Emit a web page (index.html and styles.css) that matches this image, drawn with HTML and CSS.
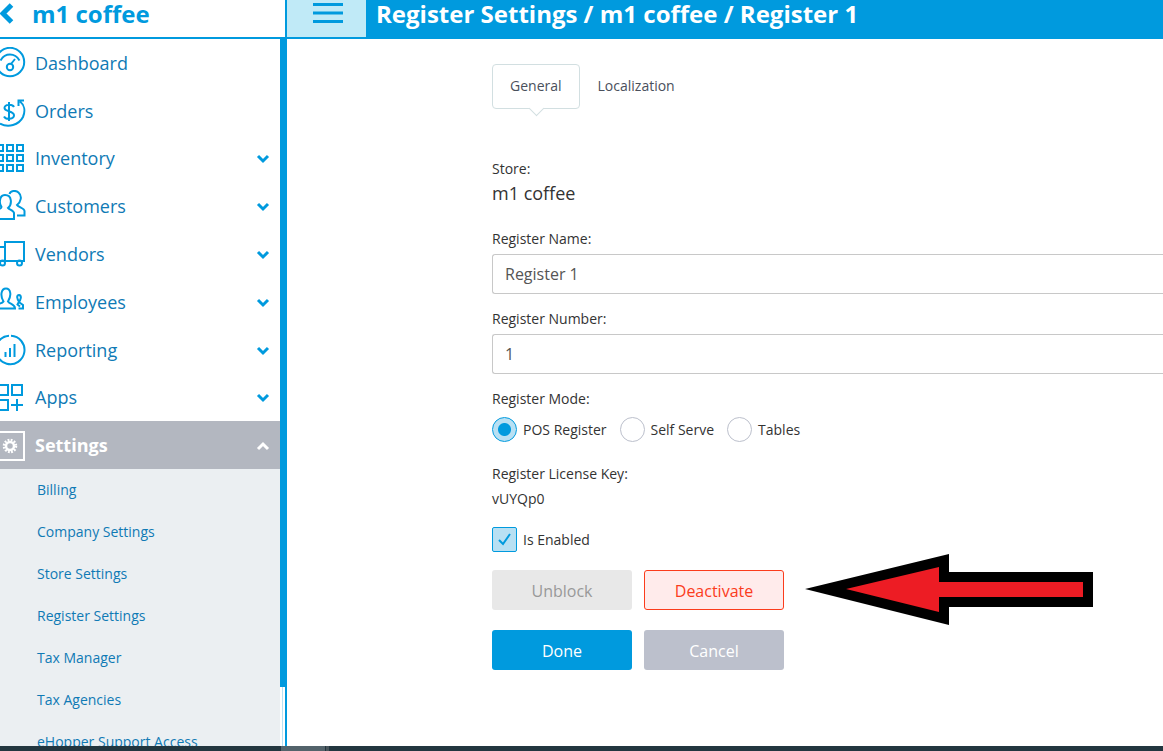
FILE: index.html
```html
<!DOCTYPE html>
<html lang="en">
<head>
    <meta charset="UTF-8">
    <meta name="viewport" content="width=device-width, initial-scale=1.0">
    <title>Register Settings</title>
    <link rel="stylesheet" href="styles.css">
</head>
<body>
    <div class="app">
        <!-- Top bar -->
        <header class="topbar">
            <a href="#" class="brand">
                <svg class="back-icon" width="14" height="28" viewBox="0 0 14 28"><path d="M11.500 5L3 13.500L11.500 22" /></svg>
                m1 coffee
            </a>
            <button type="button" class="menu-toggle" aria-label="Toggle menu">
                <svg width="30" height="20" viewBox="0 0 30 20"><path d="M0 1.500H30M0 10H30M0 18.500H30" /></svg>
            </button>
            <h1>Register Settings / m1 coffee / Register 1</h1>
        </header>

        <div class="content">
            <!-- Sidebar -->
            <aside class="sidebar">
                <nav class="nav">
                    <ul class="nav-list">
                        <li><a href="#">
                            <svg class="icon" viewBox="0 0 26 32"><circle cx="10" cy="15" r="14.2" /><path d="M0.500 13.500C5 5.500 15 5.500 19.500 13.500M11 17L15 12" /><circle cx="10" cy="20" r="3.200" /></svg>
                            Dashboard
                        </a></li>
                        <li><a href="#">
                            <svg class="icon" viewBox="0 0 26 32"><path d="M0 28.500C8 33 19 30 23 22C25.500 16 24.500 10 20 6.500M24 5.500H18.500V11" /><path d="M9 7V26M14 12C12.500 9 4.500 9 4.500 13C4.500 17 14 15.500 14 20.300C14 24.500 6 25 4 21.500" /></svg>
                            Orders
                        </a></li>
                        <li><a href="#">
                            <svg class="icon" viewBox="0 0 26 32"><path d="M-3 3H3V9H-3ZM7 3H13V9H7ZM17 3H23V9H17ZM-3 13H3V19H-3ZM7 13H13V19H7ZM17 13H23V19H17ZM-3 23H3V29H-3ZM7 23H13V29H7ZM17 23H23V29H17Z" /></svg>
                            Inventory
                            <svg class="chevron" viewBox="0 0 14 12"><path d="M2 4L7 9L12 4" /></svg>
                        </a></li>
                        <li><a href="#">
                            <svg class="icon" viewBox="0 0 26 32"><path d="M-3 29H14V23C14 20.500 9 19.500 8 18C12 15 12.500 5 5 5C-1 5-1 14 1.500 17C1.500 18.500-1 19-3 20M9.500 4C10.500 0.500 15.500 0 18.500 2.500C22.500 6 21 12 17 15C18 17 24.500 18.500 24.500 21V25.500H17" /></svg>
                            Customers
                            <svg class="chevron" viewBox="0 0 14 12"><path d="M2 4L7 9L12 4" /></svg>
                        </a></li>
                        <li><a href="#">
                            <svg class="icon" viewBox="0 0 26 32"><path d="M5 4H24V23H5ZM5 9H-1M-1 23H5" /><circle cx="2.500" cy="25" r="2.500" /><circle cx="19.500" cy="25" r="2.500" /></svg>
                            Vendors
                            <svg class="chevron" viewBox="0 0 14 12"><path d="M2 4L7 9L12 4" /></svg>
                        </a></li>
                        <li><a href="#">
                            <svg class="icon" viewBox="0 0 26 32"><path d="M-2 22.500H15C15 18 10 18.500 8 15.500C12 9 10.500 2.500 6 2.500C1 2.500 0 10 3.500 15.500C2.500 17.500-1 17.500-2 17.500M18.500 22.500H23V19L19.500 16.500C16.500 12.500 16.500 9 19 9C22 9.500 21 13.500 18.500 16.500L17.500 18.500L20 20.500" /></svg>
                            Employees
                            <svg class="chevron" viewBox="0 0 14 12"><path d="M2 4L7 9L12 4" /></svg>
                        </a></li>
                        <li><a href="#">
                            <svg class="icon" viewBox="0 0 26 32"><path d="M11 1.800A14.200 14.200 0 1 1-3 11M-3 11C-1 5 3 2.300 9 1.800M5.500 18V23M10 14V23M14.500 10V23" /></svg>
                            Reporting
                            <svg class="chevron" viewBox="0 0 14 12"><path d="M2 4L7 9L12 4" /></svg>
                        </a></li>
                        <li><a href="#">
                            <svg class="icon" viewBox="0 0 26 32"><path d="M-3 4H8V14H-3ZM12 4H22V14H12ZM-3 19H8V29H-3ZM17 18V30M11 24H23" /></svg>
                            Apps
                            <svg class="chevron" viewBox="0 0 14 12"><path d="M2 4L7 9L12 4" /></svg>
                        </a></li>
                        <li><a href="#" class="active">
                            <svg class="icon" viewBox="0 0 26 32"><path d="M-3 3H24V31H-3Z" /><circle class="gear" cx="10" cy="17" r="4" /><circle class="teeth" cx="10" cy="17" r="6" /></svg>
                            Settings
                            <svg class="chevron" viewBox="0 0 14 12"><path d="M2 10L7 5L12 10" /></svg>
                        </a></li>
                    </ul>
                    <ul class="subnav">
                        <li><a href="#">Billing</a></li>
                        <li><a href="#">Company Settings</a></li>
                        <li><a href="#">Store Settings</a></li>
                        <li><a href="#">Register Settings</a></li>
                        <li><a href="#">Tax Manager</a></li>
                        <li><a href="#">Tax Agencies</a></li>
                        <li><a href="#">eHopper Support Access</a></li>
                    </ul>
                </nav>
                <div class="scrollbar"><div class="scroll-thumb"></div></div>
            </aside>

            <!-- Register form -->
            <main class="main">
                <div class="tabs">
                    <button type="button" class="tab selected">General</button>
                    <button type="button" class="tab">Localization</button>
                </div>

                <form>
                    <div class="store">
                        <p>Store:</p>
                        <p class="store-name">m1 coffee</p>
                    </div>

                    <div class="form-group">
                        <label for="register-name">Register Name:</label>
                        <input type="text" id="register-name" value="Register 1">
                    </div>

                    <div class="form-group">
                        <label for="register-number">Register Number:</label>
                        <input type="text" id="register-number" value="1">
                    </div>

                    <fieldset class="mode">
                        <legend>Register Mode:</legend>
                        <div class="options">
                            <label class="option"><input type="radio" name="mode" checked>POS Register</label>
                            <label class="option"><input type="radio" name="mode">Self Serve</label>
                            <label class="option"><input type="radio" name="mode">Tables</label>
                        </div>
                    </fieldset>

                    <div class="license">
                        <p>Register License Key:</p>
                        <p>vUYQp0</p>
                    </div>

                    <label class="option">
                        <span class="checkbox">
                            <input type="checkbox" checked>
                            <svg class="tick" viewBox="0 0 25 25"><path d="M7 13L11 17L18 7" /></svg>
                        </span>
                        Is Enabled
                    </label>

                    <div class="actions">
                        <button type="button" class="btn btn-disabled" disabled>Unblock</button>
                        <button type="button" class="btn btn-danger">Deactivate</button>
                        <button type="submit" class="btn btn-primary">Done</button>
                        <button type="button" class="btn btn-cancel">Cancel</button>
                        <svg class="arrow" viewBox="0 0 288 71"><path d="M0 35L144 0V18H288V53H144V71Z" /><path class="arrow-fill" d="M41 35L134 13V28H278V43H134V58Z" /></svg>
                    </div>
                </form>
            </main>
        </div>

        <div class="bottom-strip"><span class="strip-item"></span><span class="strip-edge"></span></div>
    </div>
</body>
</html>
```
FILE: styles.css
```css
* {
    margin: 0;
    padding: 0;
    box-sizing: border-box;
}

body {
    font-family: 'Open Sans', sans-serif;
    font-size: 14px;
    line-height: 20px;
    background: white;
    color: #333;
    height: 100vh;
    overflow: hidden;
}

ul {
    list-style: none;
}

a {
    color: #0f7ab5;
    text-decoration: none;
}

button, input {
    font-family: inherit;
}

svg {
    fill: none;
    stroke: #009ade;
    stroke-width: 2;
    flex-shrink: 0;
}

.app {
    display: flex;
    flex-direction: column;
    height: 100vh;
}

/* Top bar */
.topbar {
    display: flex;
    height: 39px;
    flex-shrink: 0;
}

.brand {
    display: flex;
    width: 287px;
    gap: 18px;
    border-right: 2px solid #009ade;
    border-bottom: 2px solid #009ade;
    color: #009ade;
    font-size: 24px;
    font-weight: 700;
    line-height: 28px;
}

.back-icon {
    stroke-width: 5;
}

.menu-toggle {
    width: 79px;
    padding: 0 0 11px 2px;
    display: flex;
    align-items: center;
    justify-content: center;
    background: #c0eaf7;
    border: none;
    border-bottom: 2px solid #009ade;
    cursor: pointer;
}

.menu-toggle svg {
    stroke-width: 3;
}

h1 {
    flex: 1;
    padding-left: 10px;
    background: #009ade;
    color: white;
    font-size: 24px;
    font-weight: 700;
    line-height: 28px;
    white-space: nowrap;
}

.content {
    display: flex;
    flex: 1;
    min-height: 0;
}

/* Sidebar */
.sidebar {
    display: flex;
    width: 287px;
    flex-shrink: 0;
    overflow: hidden;
}

.nav {
    flex: 1;
    background: #ebeff2;
}

.nav-list {
    display: grid;
    grid-template-rows: repeat(9, 1fr);
    height: 430px;
    background: white;
}

.nav-list a {
    display: flex;
    align-items: center;
    height: 100%;
    padding-right: 10px;
    font-size: 18px;
}

.nav-list .active {
    background: #b3b7c0;
    color: white;
    font-weight: 700;
}

.icon {
    width: 26px;
    height: 32px;
    margin-right: 9px;
}

.chevron {
    width: 14px;
    height: 12px;
    margin-left: auto;
    stroke-width: 3;
}

.active svg {
    stroke: white;
}

.gear {
    stroke-width: 2.5;
}

.teeth {
    stroke-width: 2.5;
    stroke-dasharray: 1.8 1.34;
}

.subnav a {
    display: block;
    padding-left: 37px;
    line-height: 42px;
}

.scrollbar {
    width: 7px;
    border-right: 2px solid #009ade;
    background: linear-gradient(to right, white 2px, #b8e2f3 2px, #b8e2f3 3px, white 3px);
}

.scroll-thumb {
    height: 648px;
    background: #009ade;
}

/* Main */
.main {
    flex: 1;
    min-width: 0;
    padding: 25px 0 0 205px;
}

.tabs {
    display: flex;
    margin-bottom: 50px;
}

.tab {
    position: relative;
    height: 45px;
    padding: 0 18px 2px;
    background: white;
    border: none;
    color: #4a505c;
    font-size: 14px;
    cursor: pointer;
}

.tab.selected {
    padding: 0 17px 2px;
    border: 1px solid #d2dfe1;
    border-radius: 4px;
}

/* Pointer under the selected tab */
.tab.selected::after {
    content: '';
    position: absolute;
    left: 50%;
    bottom: -6px;
    width: 10px;
    height: 10px;
    margin-left: -5px;
    background: white;
    border: solid #d2dfe1;
    border-width: 0 1px 1px 0;
    transform: rotate(45deg);
}

/* Form */
.store {
    margin-bottom: 22px;
}

.store-name {
    font-size: 18px;
    line-height: 28px;
}

.form-group {
    margin-bottom: 15px;
}

.form-group label {
    display: block;
    margin-bottom: 5px;
}

input[type="text"] {
    display: block;
    width: 100%;
    height: 40px;
    padding: 0 12px;
    border: 1px solid #c8c8c8;
    border-right: none;
    border-radius: 3px 0 0 3px;
    color: #555;
    font-size: 16px;
}

.mode {
    border: none;
    margin-bottom: 22px;
}

.options {
    display: flex;
    gap: 13px;
    margin-top: 8px;
}

.option {
    display: flex;
    align-items: center;
    gap: 6px;
}

input[type="radio"],
input[type="checkbox"] {
    display: block;
    appearance: none;
    width: 25px;
    height: 25px;
    border: 1px solid #bcc0cc;
    background: white;
}

input[type="radio"] {
    border-radius: 50%;
}

input[type="radio"]:checked {
    border-color: #009ade;
    background: radial-gradient(circle, #009ade 6px, #b8e0f3 7px);
}

input[type="checkbox"] {
    border-radius: 2px;
}

input[type="checkbox"]:checked {
    border-color: #009ade;
    background: #b8e0f3;
}

.checkbox {
    position: relative;
}

.tick {
    position: absolute;
    inset: 0;
    pointer-events: none;
}

.license {
    display: grid;
    gap: 5px;
    margin-bottom: 18px;
}

/* Buttons */
.actions {
    position: relative;
    display: grid;
    grid-template-columns: 140px 140px;
    gap: 20px 12px;
    margin-top: 18px;
}

.btn {
    height: 40px;
    padding-top: 2px;
    border: none;
    border-radius: 3px;
    color: white;
    font-size: 16px;
    cursor: pointer;
}

.btn-disabled {
    background: #e8e8e8;
    color: #999;
}

.btn-danger {
    background: #ffebeb;
    border: 1px solid #fb3c1c;
    color: #fb3c1c;
}

.btn-primary {
    background: #009ade;
}

.btn-cancel {
    background: #bcc0cc;
}

.arrow {
    position: absolute;
    left: 313px;
    top: -16px;
    width: 288px;
    height: 71px;
    fill: black;
    stroke: none;
}

.arrow-fill {
    fill: #ed1c24;
}

/* Bottom strip */
.bottom-strip {
    display: flex;
    gap: 1px;
    height: 5px;
    flex-shrink: 0;
    padding-left: 281px;
    background: #22363f;
}

.strip-item {
    width: 44px;
    background: #53636b;
}

.strip-edge {
    width: 3px;
    background: #48555c;
}
```
